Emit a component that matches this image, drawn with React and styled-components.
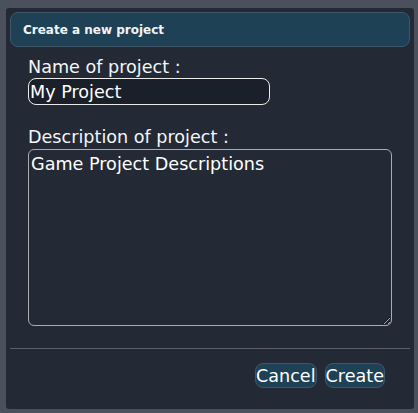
import React, { useEffect, useRef } from 'react'
import styled, { createGlobalStyle } from 'styled-components'

const Global = createGlobalStyle`
  html, body {
    margin: 0;
    background: #4b515c;
    font-family: "DejaVu Sans", Verdana, sans-serif;
  }
`

const Page = styled.div`
  width: 418px;
  height: 413px;
  padding: 8px 4px 4px 6px;
  box-sizing: border-box;
`

const Panel = styled.div`
  width: 408px;
  height: 401px;
  background: #232a35;
  border-radius: 3px;
  padding: 4px;
  box-sizing: border-box;
  display: flex;
  flex-direction: column;
`

const Header = styled.div`
  height: 35px;
  box-sizing: border-box;
  background: #1e4156;
  border: 1px solid #3f5868;
  border-radius: 8px;
  display: flex;
  align-items: center;
  padding-left: 12px;
  color: #f2f4f6;
  font-size: 12px;
  font-weight: bold;
`

const Form = styled.form`
  display: flex;
  flex-direction: column;
  padding: 10px 0 0 18px;
`

const Label = styled.label`
  color: #f4f6f8;
  font-size: 17.6px;
  line-height: 20px;
  margin-top: ${p => p.$gap || 0}px;
`

const Input = styled.input`
  width: 242px;
  height: 27px;
  box-sizing: border-box;
  margin-top: 1px;
  background: #19202a;
  border: 1px solid #ececec;
  border-radius: 8px;
  color: #ffffff;
  caret-color: #ffffff;
  font-family: inherit;
  font-size: 17.6px;
  padding: 0 1px;
  outline: none;
`

const Area = styled.textarea`
  width: 364px;
  height: 177px;
  box-sizing: border-box;
  margin-top: 2px;
  background: #232a35;
  border: 1px solid #a9acb0;
  border-radius: 6px;
  color: #ffffff;
  font-family: inherit;
  font-size: 17.6px;
  line-height: 20px;
  padding: 4px 2px;
  resize: both;
`

const Divider = styled.hr`
  border: none;
  border-top: 1px solid #5b616b;
  margin: 22px 0 0 0;
`

const Footer = styled.div`
  display: flex;
  justify-content: flex-end;
  gap: 8px;
  padding: 14px 25px 0 0;
`

const Button = styled.button`
  height: 25px;
  box-sizing: border-box;
  background: #1e4156;
  border: 1px solid #3f5868;
  border-radius: 8px;
  color: #ffffff;
  font-family: inherit;
  font-size: 17.6px;
  line-height: 20px;
  padding: 0;
  cursor: pointer;
`

export default function App() {
  const nameRef = useRef(null)

  useEffect(() => {
    const el = nameRef.current
    if (el) {
      el.focus()
      el.setSelectionRange(el.value.length, el.value.length)
    }
  }, [])

  return (
    <Page>
      <Global />
      <Panel>
        <Header>Create a new project</Header>
        <Form>
          <Label>Name of project :</Label>
          <Input ref={nameRef} defaultValue="My Project" />
          <Label $gap={22}>Description of project :</Label>
          <Area defaultValue="Game Project Descriptions" />
        </Form>
        <Divider />
        <Footer>
          <Button type="button">Cancel</Button>
          <Button type="button">Create</Button>
        </Footer>
      </Panel>
    </Page>
  )
}
